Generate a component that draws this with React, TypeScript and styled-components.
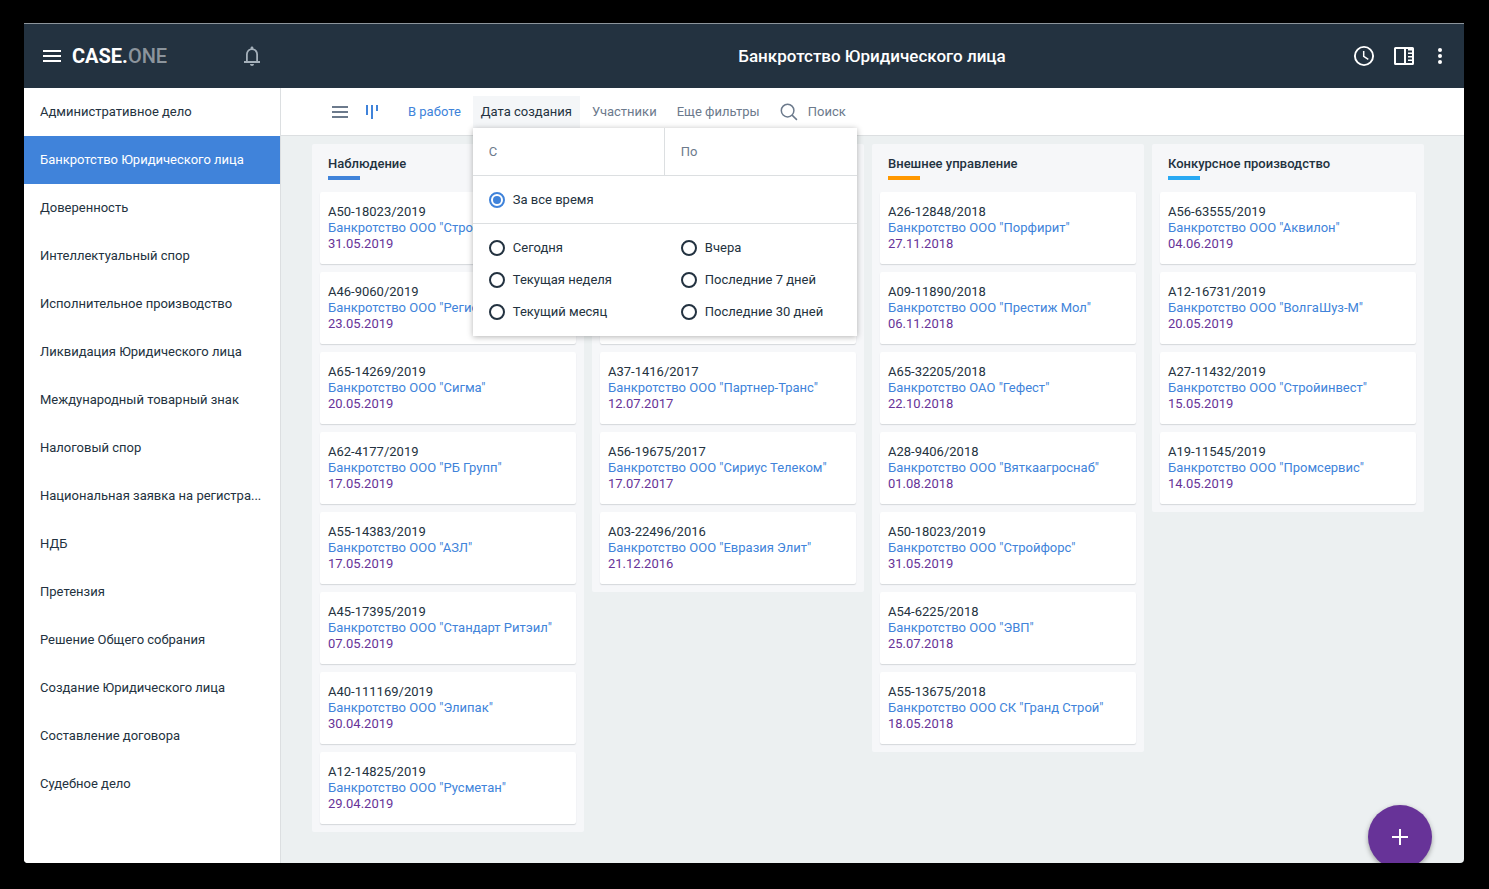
import React, { useState } from "react";
import styled, { createGlobalStyle } from "styled-components";

const color = {
  navy: "#233240",
  blue: "#4083da",
  purple: "#673398",
  slate: "#6c7a8c",
  line: "#dcdfe1",
  board: "#ecf0f1",
  column: "#f6f7f9",
};

const GlobalStyle = createGlobalStyle`
  *, *::before, *::after { box-sizing: border-box; }
  body {
    margin: 0;
    background: #000;
    color: ${color.navy};
    font: 400 13px/16px Roboto, sans-serif;
  }
  button, input { font: inherit; color: inherit; }
  button { border: 0; padding: 0; background: none; cursor: pointer; }
`;

const Page = styled.div`
  display: flex;
  min-height: 100vh;
  padding: 23px 25px 26px 24px;
`;

const Frame = styled.div`
  position: relative;
  flex: 1;
  min-width: 0;
  display: flex;
  flex-direction: column;
  overflow: hidden;
  border-top: 1px solid #8d959c;
  border-radius: 0 0 4px 4px;
  background: ${color.board};
`;

const Header = styled.header`
  display: flex;
  height: 64px;
  background: ${color.navy};
  color: #fff;
`;

const Brand = styled.div`
  display: flex;
  align-items: center;
  gap: 8px;
  width: 256px;
  padding: 0 16px;
`;

const Logo = styled.a`
  flex: 1;
  color: #fff;
  font-size: 20px;
  line-height: 24px;
  font-weight: 700;
  text-decoration: none;

  span {
    color: #8b949c;
    font-weight: 500;
  }
`;

const IconButton = styled.button<{ $tone?: string }>`
  display: flex;
  align-items: center;
  justify-content: center;
  width: 24px;
  height: 24px;
  color: ${(p) => p.$tone ?? "inherit"};
`;

const TitleBar = styled.div`
  flex: 1;
  display: grid;
  grid-template-columns: 1fr auto 1fr;
  align-items: center;
`;

const Title = styled.h1`
  grid-column: 2;
  margin: 0;
  font-size: 17px;
  line-height: 24px;
  font-weight: 500;
`;

const Actions = styled.div`
  display: flex;
  justify-content: flex-end;
  gap: 16px;
  padding-right: 12px;

  button:last-child {
    margin-left: -4px;
  }
`;

const Body = styled.div`
  flex: 1;
  display: flex;
`;

const Sidebar = styled.nav`
  flex: none;
  width: 257px;
  border-right: 1px solid ${color.line};
  background: #fff;
`;

const SidebarLink = styled.a<{ $active: boolean }>`
  display: block;
  padding: 16px;
  overflow: hidden;
  white-space: nowrap;
  text-decoration: none;
  color: ${(p) => (p.$active ? "#fff" : color.navy)};
  background: ${(p) => (p.$active ? color.blue : "transparent")};
`;

const Main = styled.main`
  flex: 1;
  min-width: 0;
`;

const Toolbar = styled.div`
  display: flex;
  align-items: center;
  height: 48px;
  padding-left: 47px;
  border-bottom: 1px solid ${color.line};
  background: #fff;
`;

const ViewSwitch = styled.div`
  display: flex;
  gap: 8px;
  margin-right: 16px;
`;

const Filters = styled.div`
  display: flex;
  align-items: center;
  gap: 4px;
`;

const FilterSlot = styled.div`
  position: relative;
`;

const Filter = styled.button<{ $tone: string; $open?: boolean }>`
  display: block;
  height: 32px;
  padding: 0 8px;
  white-space: nowrap;
  color: ${(p) => p.$tone};
  background: ${(p) => (p.$open ? "#f4f6f8" : "transparent")};
`;

const Search = styled.label`
  display: flex;
  align-items: center;
  gap: 8px;
  margin-left: 12px;
  color: ${color.slate};
`;

const TextInput = styled.input`
  width: 100%;
  min-width: 0;
  padding: 0;
  border: 0;
  outline: 0;
  background: transparent;

  &::placeholder {
    color: ${color.slate};
    opacity: 1;
  }
`;

const Popup = styled.form`
  position: absolute;
  z-index: 2;
  top: 100%;
  left: 0;
  width: 384px;
  background: #fff;
  box-shadow: 0 1px 6px rgba(0, 0, 0, 0.3);
`;

const PopupRow = styled.div`
  display: grid;
  grid-template-columns: 1fr 1fr;
  height: 48px;
  box-shadow: inset 0 -1px ${color.line};
`;

const DateField = styled.label`
  display: flex;
  align-items: center;
  padding: 0 16px;

  &:first-child {
    border-right: 1px solid ${color.line};
  }
`;

const Options = styled.div`
  display: grid;
  grid-template-columns: 1fr 1fr;
  grid-auto-rows: 32px;
  padding: 8px 0;
`;

const RadioLabel = styled.label`
  display: flex;
  align-items: center;
  gap: 8px;
  padding-left: 16px;
  cursor: pointer;
`;

const Radio = styled.input`
  appearance: none;
  display: grid;
  place-content: center;
  width: 16px;
  height: 16px;
  margin: 0;
  border: 2px solid ${color.navy};
  border-radius: 50%;

  &:checked {
    border-color: ${color.blue};
  }
  &:checked::before {
    content: "";
    width: 8px;
    height: 8px;
    border-radius: 50%;
    background: ${color.blue};
  }
`;

const Board = styled.div`
  display: flex;
  align-items: flex-start;
  gap: 8px;
  padding: 8px 31px 31px;
`;

const Column = styled.section`
  flex: none;
  width: 272px;
  padding: 0 8px 8px;
  border-radius: 2px;
  background: ${color.column};
`;

const ColumnHead = styled.div<{ $accent: string }>`
  height: 48px;
  padding: 12px 8px;

  &::after {
    content: "";
    display: block;
    width: 32px;
    height: 4px;
    margin-top: 4px;
    background: ${(p) => p.$accent};
  }
`;

const ColumnTitle = styled.h2`
  margin: 0;
  font-size: 13px;
  line-height: 16px;
  font-weight: 500;
`;

const Cards = styled.div`
  display: grid;
  gap: 8px;
`;

const Card = styled.article`
  min-height: 72px;
  padding: 12px 8px;
  border-radius: 2px;
  background: #fff;
  box-shadow: 0 1px 1px rgba(35, 50, 64, 0.16);
`;

const CaseLink = styled.a`
  display: block;
  color: ${color.blue};
  text-decoration: none;
  white-space: nowrap;
`;

const CaseDate = styled.time`
  display: block;
  color: ${color.purple};
`;

const AddButton = styled.button`
  position: absolute;
  right: 32px;
  bottom: -6px;
  display: flex;
  align-items: center;
  justify-content: center;
  width: 64px;
  height: 64px;
  border-radius: 50%;
  color: #fff;
  background: ${color.purple};
  box-shadow: 0 2px 5px rgba(0, 0, 0, 0.35);
`;

const Svg = ({ children }: { children: React.ReactNode }) => (
  <svg width="24" height="24" viewBox="0 0 24 24" fill="currentColor" aria-hidden="true">
    {children}
  </svg>
);

const MenuIcon = () => (
  <Svg>
    <path d="M3 6h18v2H3zM3 11h18v2H3zM3 16h18v2H3z" />
  </Svg>
);

const BellIcon = () => (
  <Svg>
    <path d="M10 20h4c0 1.100-.9 2-2 2s-2-.9-2-2z" />
    <path d="M12 2.500c-.8 0-1.400.6-1.400 1.400v.5C7.700 5.100 6 7.600 6 10.500V17H4v2h16v-2h-2v-6.500c0-2.900-1.700-5.400-4.600-6.100v-.5c0-.8-.6-1.400-1.400-1.400zM12 6c2.600 0 4.200 2 4.200 4.500V17H7.800v-6.500C7.800 8 9.400 6 12 6z" />
  </Svg>
);

const ClockIcon = () => (
  <Svg>
    <circle cx="12" cy="12" r="9.100" fill="none" stroke="currentColor" strokeWidth="1.900" />
    <path d="M11.700 7v5.400l4.600 2.900" fill="none" stroke="currentColor" strokeWidth="1.500" />
  </Svg>
);

const ReaderIcon = () => (
  <Svg>
    <path
      fillRule="evenodd"
      d="M3.500 3h17A1.500 1.500 0 0 1 22 4.500v15a1.500 1.500 0 0 1-1.500 1.500h-17A1.500 1.500 0 0 1 2 19.500v-15A1.500 1.500 0 0 1 3.500 3zM4 5v14h8V5zM14 5v14h6v-2h-4v-1.500h4v-2h-4V12h4v-2h-4V8.500h4v-2h-4V5z"
    />
  </Svg>
);

const MoreIcon = () => (
  <Svg>
    <circle cx="12" cy="6" r="2" />
    <circle cx="12" cy="12" r="2" />
    <circle cx="12" cy="18" r="2" />
  </Svg>
);

const ListIcon = () => (
  <Svg>
    <path d="M4 6h16v2H4zM4 11h16v2H4zM4 16h16v2H4z" />
  </Svg>
);

const KanbanIcon = () => (
  <Svg>
    <path d="M6 5h2v10H6zM11 5h2v14h-2zM16 5h2v6h-2z" />
  </Svg>
);

const SearchIcon = () => (
  <svg width="18" height="18" viewBox="0 0 18 18" fill="none" stroke="currentColor" strokeWidth="1.500" aria-hidden="true">
    <circle cx="7.600" cy="7.600" r="6.300" />
    <path d="M12.100 12.100l4.800 4.800" />
  </svg>
);

const PlusIcon = () => (
  <Svg>
    <path d="M11 4h2v7h7v2h-7v7h-2v-7H4v-2h7z" />
  </Svg>
);

const sections = [
  "Административное дело",
  "Банкротство Юридического лица",
  "Доверенность",
  "Интеллектуальный спор",
  "Исполнительное производство",
  "Ликвидация Юридического лица",
  "Международный товарный знак",
  "Налоговый спор",
  "Национальная заявка на регистра...",
  "НДБ",
  "Претензия",
  "Решение Общего собрания",
  "Создание Юридического лица",
  "Составление договора",
  "Судебное дело",
];

type Case = [number: string, name: string, date: string];

interface Stage {
  title?: string;
  accent: string;
  cases: (Case | null)[];
}

const stages: Stage[] = [
  {
    title: "Наблюдение",
    accent: color.blue,
    cases: [
      ["А50-18023/2019", 'Банкротство ООО "Стройфорс"', "31.05.2019"],
      ["А46-9060/2019", 'Банкротство ООО "Регион"', "23.05.2019"],
      ["А65-14269/2019", 'Банкротство ООО "Сигма"', "20.05.2019"],
      ["А62-4177/2019", 'Банкротство ООО "РБ Групп"', "17.05.2019"],
      ["А55-14383/2019", 'Банкротство ООО "АЗЛ"', "17.05.2019"],
      ["А45-17395/2019", 'Банкротство ООО "Стандарт Ритэил"', "07.05.2019"],
      ["А40-111169/2019", 'Банкротство ООО "Элипак"', "30.04.2019"],
      ["А12-14825/2019", 'Банкротство ООО "Русметан"', "29.04.2019"],
    ],
  },
  {
    accent: "transparent",
    cases: [
      null,
      null,
      ["А37-1416/2017", 'Банкротство ООО "Партнер-Транс"', "12.07.2017"],
      ["А56-19675/2017", 'Банкротство ООО "Сириус Телеком"', "17.07.2017"],
      ["А03-22496/2016", 'Банкротство ООО "Евразия Элит"', "21.12.2016"],
    ],
  },
  {
    title: "Внешнее управление",
    accent: "#ff9800",
    cases: [
      ["А26-12848/2018", 'Банкротство ООО "Порфирит"', "27.11.2018"],
      ["А09-11890/2018", 'Банкротство ООО "Престиж Мол"', "06.11.2018"],
      ["А65-32205/2018", 'Банкротство ОАО "Гефест"', "22.10.2018"],
      ["А28-9406/2018", 'Банкротство ООО "Вяткаагроснаб"', "01.08.2018"],
      ["А50-18023/2019", 'Банкротство ООО "Стройфорс"', "31.05.2019"],
      ["А54-6225/2018", 'Банкротство ООО "ЭВП"', "25.07.2018"],
      ["А55-13675/2018", 'Банкротство ООО СК "Гранд Строй"', "18.05.2018"],
    ],
  },
  {
    title: "Конкурсное производство",
    accent: "#29a9f3",
    cases: [
      ["А56-63555/2019", 'Банкротство ООО "Аквилон"', "04.06.2019"],
      ["А12-16731/2019", 'Банкротство ООО "ВолгаШуз-М"', "20.05.2019"],
      ["А27-11432/2019", 'Банкротство ООО "Стройинвест"', "15.05.2019"],
      ["А19-11545/2019", 'Банкротство ООО "Промсервис"', "14.05.2019"],
    ],
  },
];

const allTime = "За все время";
const periods = [
  "Сегодня",
  "Вчера",
  "Текущая неделя",
  "Последние 7 дней",
  "Текущий месяц",
  "Последние 30 дней",
];

function DatePopup() {
  const [period, setPeriod] = useState(allTime);
  const option = (name: string) => (
    <RadioLabel key={name}>
      <Radio type="radio" name="period" checked={period === name} onChange={() => setPeriod(name)} />
      {name}
    </RadioLabel>
  );
  return (
    <Popup>
      <PopupRow>
        <DateField>
          <TextInput placeholder="С" />
        </DateField>
        <DateField>
          <TextInput placeholder="По" />
        </DateField>
      </PopupRow>
      <PopupRow>{option(allTime)}</PopupRow>
      <Options>{periods.map(option)}</Options>
    </Popup>
  );
}

export default function App() {
  return (
    <>
      <GlobalStyle />
      <Page>
        <Frame>
          <Header>
            <Brand>
              <IconButton type="button"><MenuIcon /></IconButton>
              <Logo href="#">CASE.<span>ONE</span></Logo>
              <IconButton type="button" $tone="#a4b0ba"><BellIcon /></IconButton>
            </Brand>
            <TitleBar>
              <Title>Банкротство Юридического лица</Title>
              <Actions>
                <IconButton type="button"><ClockIcon /></IconButton>
                <IconButton type="button"><ReaderIcon /></IconButton>
                <IconButton type="button"><MoreIcon /></IconButton>
              </Actions>
            </TitleBar>
          </Header>
          <Body>
            <Sidebar>
              {sections.map((name, i) => (
                <SidebarLink key={name} href="#" $active={i === 1}>{name}</SidebarLink>
              ))}
            </Sidebar>
            <Main>
              <Toolbar>
                <ViewSwitch>
                  <IconButton type="button" $tone={color.slate}><ListIcon /></IconButton>
                  <IconButton type="button" $tone={color.blue}><KanbanIcon /></IconButton>
                </ViewSwitch>
                <Filters>
                  <Filter type="button" $tone={color.blue}>В работе</Filter>
                  <FilterSlot>
                    <Filter type="button" $tone={color.navy} $open>Дата создания</Filter>
                    <DatePopup />
                  </FilterSlot>
                  <Filter type="button" $tone={color.slate}>Участники</Filter>
                  <Filter type="button" $tone={color.slate}>Еще фильтры</Filter>
                </Filters>
                <Search>
                  <IconSlot><SearchIcon /></IconSlot>
                  <TextInput type="search" placeholder="Поиск" />
                </Search>
              </Toolbar>
              <Board>
                {stages.map((stage, i) => (
                  <Column key={i}>
                    <ColumnHead $accent={stage.accent}>
                      {stage.title && <ColumnTitle>{stage.title}</ColumnTitle>}
                    </ColumnHead>
                    <Cards>
                      {stage.cases.map((item, j) => (
                        <Card key={j}>
                          {item && (
                            <>
                              {item[0]}
                              <CaseLink href="#">{item[1]}</CaseLink>
                              <CaseDate>{item[2]}</CaseDate>
                            </>
                          )}
                        </Card>
                      ))}
                    </Cards>
                  </Column>
                ))}
              </Board>
            </Main>
          </Body>
          <AddButton type="button"><PlusIcon /></AddButton>
        </Frame>
      </Page>
    </>
  );
}

const IconSlot = styled.span`
  display: flex;
  flex: none;
  width: 20px;
`;
